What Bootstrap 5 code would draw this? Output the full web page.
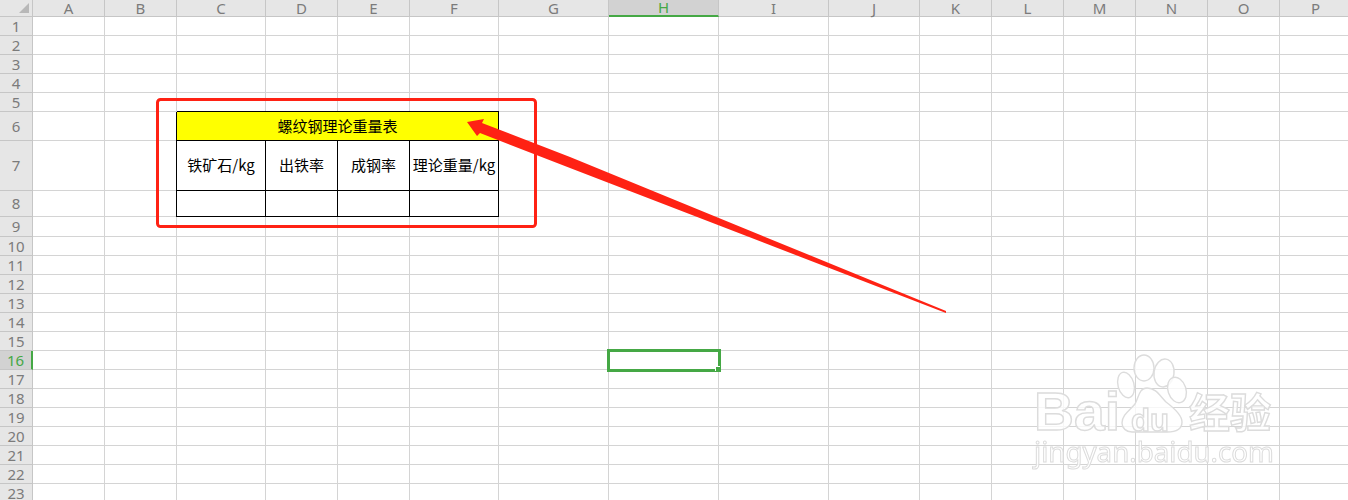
<!DOCTYPE html>
<html lang="zh">
<head>
    <meta charset="UTF-8">
    <meta name="viewport" content="width=device-width, initial-scale=1.0">
    <title>螺纹钢理论重量表</title>
    <link href="https://cdn.jsdelivr.net/npm/bootstrap@5.3.0/dist/css/bootstrap.min.css" rel="stylesheet">
    <style>
        body {
            background-color: #fff;
            overflow: hidden;
        }
        .sheet-wrap {
            width: 1348px;
            height: 500px;
        }
        .sheet {
            width: 1351px;
            grid-template-columns: 33px 72px 72px 89px 72px 72px 89px 110px 110px 110px 91px 72px 72px 72px 72px 72px 72px;
            grid-template-rows: 17px repeat(5, 19px) 29px 50px 26px 20px repeat(14, 19px);
            font-family: "Noto Sans", "Noto Sans CJK SC", sans-serif;
            font-size: 15px;
        }
        .cell {
            border-right: 1px solid #d4d4d4;
            border-bottom: 1px solid #d4d4d4;
        }
        .head-cell {
            background-color: #e6e6e6;
            color: #7b7b7b;
            border-color: #c6c6c6;
            line-height: 1;
        }
        .head-cell.active-head {
            background-color: #d2d2d2;
            color: #45a845;
        }
        .col-active {
            border-bottom: 2px solid #45a845;
        }
        .row-active {
            border-right: 2px solid #45a845;
        }
        .corner-mark {
            width: 10px;
            height: 10px;
            background-color: #b8b8b8;
            clip-path: polygon(100% 0, 100% 100%, 0 100%);
            margin: 3px 3px 0 0;
        }
        .tb-cell {
            border-color: #000;
            box-shadow: -1px 0 #000, 0 -1px #000;
            color: #000;
            font-family: "Noto Sans CJK SC", sans-serif;
            font-size: 15px;
            white-space: nowrap;
        }
        .tb-title {
            background-color: #ff0;
            grid-column: span 4;
        }
        .cur-cell {
            border: 0;
            box-shadow: 0 0 0 2px #45a845, inset 0 0 0 1px #45a845;
            z-index: 2;
        }
        .cur-cell::after {
            content: "";
            position: absolute;
            right: -2px;
            bottom: -2px;
            width: 5px;
            height: 5px;
            background-color: #45a845;
            box-shadow: -1px -1px 0 #fff;
        }
        .overlay {
            top: 0;
            left: 0;
            z-index: 3;
            pointer-events: none;
        }
        .wm-shape {
            fill: rgba(255, 255, 255, 0.8);
            stroke: #dcdcdc;
            stroke-width: 1.4;
        }
        .wm-text {
            font-family: "Liberation Sans", "Noto Sans CJK SC", sans-serif;
            font-weight: 700;
        }
        .wm-thin {
            font-family: "Noto Sans", sans-serif;
            font-weight: 400;
            stroke-width: 1;
        }
    </style>
</head>
<body>
    <div class="sheet-wrap position-relative overflow-hidden">
        <div class="sheet d-grid" id="sheet"></div>

        <!-- red markup and watermark -->
        <svg class="overlay position-absolute" width="1348" height="500" viewBox="0 0 1348 500">
            <rect x="157.5" y="99.5" width="378" height="127" rx="3" fill="none" stroke="#ff2214" stroke-width="3"/>
            <polygon fill="#ff2214" points="467,122 484,119 482,123 570,157 946,311 946,313 570,168 480,133 477,136"/>

            <g filter="url(#soft)">
                <ellipse class="wm-shape" cx="1144" cy="368" rx="10" ry="13"/>
                <ellipse class="wm-shape" cx="1164" cy="373" rx="10" ry="14" transform="rotate(8 1164 373)"/>
                <ellipse class="wm-shape" cx="1126" cy="385" rx="8" ry="13" transform="rotate(-15 1126 385)"/>
                <ellipse class="wm-shape" cx="1177" cy="390" rx="9" ry="13" transform="rotate(-18 1177 390)"/>
                <path class="wm-shape" d="M1147 388c9 0 13 8 19 14 8 6 16 13 16 20 0 8-7 10-15 10h-35c-6 0-10-4-10-9 0-8 8-13 13-19 4-7 4-16 12-16z"/>
                <text class="wm-shape wm-text" x="1034" y="430" font-size="53" textLength="86" lengthAdjust="spacingAndGlyphs">Bai</text>
                <text class="wm-shape wm-text" x="1131" y="431" font-size="31" textLength="38" lengthAdjust="spacingAndGlyphs">du</text>
                <text class="wm-shape wm-text" x="1189" y="428" font-size="41">经验</text>
                <text class="wm-shape wm-thin" x="1034" y="462" font-size="28" textLength="240" lengthAdjust="spacingAndGlyphs">jingyan.baidu.com</text>
            </g>
            <defs>
                <filter id="soft"><feGaussianBlur stdDeviation="0.5"/></filter>
            </defs>
        </svg>
    </div>

    <script>
        var sheet = document.getElementById('sheet');
        var cols = 'ABCDEFGHIJKLMNOP'.split('');
        var center = ' d-flex align-items-center justify-content-center';

        function add(cls, text) {
            var el = document.createElement('div');
            el.className = 'cell' + cls;
            if (text) el.textContent = text;
            sheet.appendChild(el);
            return el;
        }

        // 表头
        var corner = add(' head-cell d-flex align-items-start justify-content-end');
        corner.innerHTML = '<span class="corner-mark"></span>';
        cols.forEach(function (c) {
            add(' head-cell' + center + (c === 'H' ? ' active-head col-active' : ''), c);
        });

        var table = {
            7: ['铁矿石/kg', '出铁率', '成钢率', '理论重量/kg'],
            8: ['', '', '', '']
        };

        for (var r = 1; r <= 23; r++) {
            add(' head-cell' + center + (r === 16 ? ' active-head row-active' : ''), String(r));
            for (var i = 0; i < cols.length; i++) {
                var c = cols[i];
                if (c === 'C' && r === 6) {
                    add(' tb-cell tb-title' + center, '螺纹钢理论重量表');
                    i += 3;
                } else if (table[r] && i >= 2 && i <= 5) {
                    add(' tb-cell' + center, table[r][i - 2]);
                } else if (c === 'H' && r === 16) {
                    add(' cur-cell position-relative');
                } else {
                    add('');
                }
            }
        }
    </script>
    <script src="https://cdn.jsdelivr.net/npm/bootstrap@5.3.0/dist/js/bootstrap.bundle.min.js"></script>
</body>
</html>
